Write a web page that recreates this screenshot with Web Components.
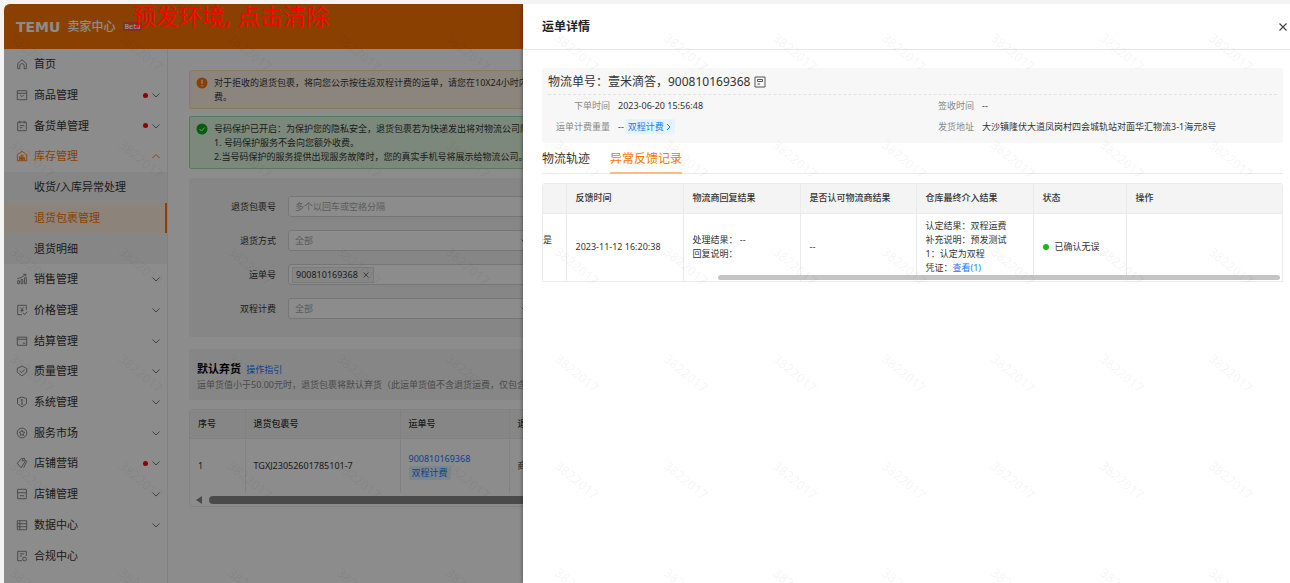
<!DOCTYPE html>
<html lang="zh-CN">
<head>
<meta charset="utf-8">
<meta name="viewport" content="width=device-width, initial-scale=1">
<title>运单详情</title>
<style>
  html, body {
    height: 100%;
    margin: 0;
  }
  body {
    --orange: #fb7701;
    --link: #1677ff;
    --line: #ebebeb;
    --panel: #f5f5f5;
    box-sizing: border-box;
    padding: 4px 0 0 4px;
    background: #f4f4f4;
    color: #333;
    font: 9px/14px "Noto Sans", "Noto Sans CJK SC", sans-serif;
    overflow: hidden;
  }
</style>
</head>
<body>
<seller-app></seller-app>

<script>
const ICONS = {
  home: '<path d="M2 6.5 7 2l5 4.5V12.5H9.5V9a2.5 2.5 0 0 0-5 0v3.5H2z"/>',
  goods: '<path d="M1.5 2h11v10.5h-11zM1.5 5h11M5 7l2 2 2-2"/>',
  order: '<path d="M2 2.5h10v10H2zM4.5 1v3M9.5 1v3M4.5 6.5h5M4.5 9h3"/>',
  stock: '<path d="M1.5 5.5 7 1.5l5.500 4v7h-11zM4 12V8h2v4M6 12V6h2v6M8 12V9h2v3M4 10h6"/>',
  sales: '<path d="M2 9h2v3.500H2zM6 7.500h2v5H6zM10 5.500h2v7h-2zM1.500 6.500C5 6 8 4.500 11 1.500M8.500 1.500H11.500V4"/>',
  price: '<path d="M7 12.500H2v-11h10V7M5 4l2 2.500L9 4M7 6.500V10M5 7.500h4M8.500 10.500l1.500 2 3-3.500"/>',
  settle: '<path d="M1.500 2.500h11v9.500h-11zM1.500 5h11M8 9.500h3"/>',
  quality: '<path d="M7 1.200 12.500 4v4.500L7 12.800 1.500 8.500V4zM4.500 7 6.500 9l3.500-3.500"/>',
  system: '<path d="M7 1.200 12.200 3v6L7 12.800 1.800 9V3zM7 4v5.500M5.500 4.500h2M6 9.500h2"/>',
  service: '<circle cx="7" cy="7" r="5.700"/><path d="m7 3.800 1 2 2.200.3-1.600 1.600.4 2.200-2-1-2 1 .4-2.200L3.800 6.100 6 5.800z"/>',
  promo: '<path d="M1.500 7.500 6 2l4-.5.500 4L6 12.500zM11 3.500l1.500 1.500L9 12.500"/><circle cx="8" cy="4" r=".8"/>',
  store: '<path d="M2 1.500h10l.5 4H1.500zM2 5.500v7h10v-7M4.500 9h5"/>',
  data: '<path d="M1.500 2h11v10.500h-11zM1.500 5.500h11M1.500 9h11M4.500 2v10.500"/>',
  rule: '<path d="M7 12.500H2v-11h10V7M4.500 4.500h5M4.500 7H7"/><circle cx="10" cy="10.500" r="2.200"/>'
};

const icon = name => `<svg class="icon" viewBox="0 0 14 14" width="12" height="12" fill="none" stroke="currentColor">${ICONS[name]}</svg>`;

function define(name, render) {
  customElements.define(name, class extends HTMLElement {
    constructor() {
      super();
      this.attachShadow({ mode: "open" });
    }
    connectedCallback() {
      this.shadowRoot.innerHTML = render(this);
    }
  });
}

define("top-bar", () => `
  <style>
    :host {
      display: flex;
      align-items: center;
      box-sizing: border-box;
      height: 45px;
      padding: 0 12px;
      background: var(--orange);
      color: #fff;
    }
    b { font: bold 14px/20px "DejaVu Sans", sans-serif; }
    span { margin-left: 7px; font-size: 12px; font-weight: 500; }
    i {
      margin-left: 8px;
      padding: 0 1px;
      border-radius: 2px;
      background: #f5503c;
      font: bold 7px/9px "Noto Sans", sans-serif;
    }
  </style>
  <b>TEMU</b><span>卖家中心</span><i>Beta</i>
`);

define("nav-item", el => `
  <style>
    :host { display: flex; flex: 1; min-height: 20px; }
    a {
      display: flex;
      flex: 1;
      align-items: center;
      gap: 4px;
      padding: 0 7px 0 12px;
      color: #333;
      font-size: 11px;
      text-decoration: none;
    }
    .label { flex: 1; }
    svg { flex: none; color: #777; }
    .icon { margin-right: 2px; }
    .dot { width: 5px; height: 5px; border-radius: 50%; background: #f00; }
    :host([sub]) { background: #f5f5f5; }
    :host([sub]) a { padding-left: 30px; }
    :host([open]) a, :host([open]) svg, :host([current]) a { color: var(--orange); }
    :host([current]) { background: #fff1e0; border-right: 2px solid var(--orange); }
  </style>
  <a href="#">
    ${el.hasAttribute("icon") ? icon(el.getAttribute("icon")) : ""}
    <span class="label"><slot></slot></span>
    ${el.hasAttribute("dot") ? '<span class="dot"></span>' : ""}
    ${el.hasAttribute("arrow") ? `<svg viewBox="0 0 8 8" width="8" height="8" fill="none" stroke="currentColor">
      <path d="${el.hasAttribute("open") ? "M0.500 6 4 2.500 7.500 6" : "M0.500 2.500 4 6 7.500 2.500"}"/></svg>` : ""}
  </a>
`);

define("side-nav", () => `
  <style>
    :host { display: flex; width: 163px; flex: none; border-right: 1px solid var(--line); }
    nav { display: flex; flex: 1; flex-direction: column; padding-bottom: 12px; }
  </style>
  <nav>
    <nav-item icon="home">首页</nav-item>
    <nav-item icon="goods" dot arrow>商品管理</nav-item>
    <nav-item icon="order" dot arrow>备货单管理</nav-item>
    <nav-item icon="stock" arrow open>库存管理</nav-item>
    <nav-item sub>收货/入库异常处理</nav-item>
    <nav-item sub current>退货包裹管理</nav-item>
    <nav-item sub>退货明细</nav-item>
    <nav-item icon="sales" arrow>销售管理</nav-item>
    <nav-item icon="price" arrow>价格管理</nav-item>
    <nav-item icon="settle" arrow>结算管理</nav-item>
    <nav-item icon="quality" arrow>质量管理</nav-item>
    <nav-item icon="system" arrow>系统管理</nav-item>
    <nav-item icon="service" arrow>服务市场</nav-item>
    <nav-item icon="promo" dot arrow>店铺营销</nav-item>
    <nav-item icon="store" arrow>店铺管理</nav-item>
    <nav-item icon="data" arrow>数据中心</nav-item>
    <nav-item icon="rule">合规中心</nav-item>
  </nav>
`);

define("notice-bar", el => `
  <style>
    :host {
      display: flex;
      gap: 6px;
      padding: 5px 6px 4px;
      border: 1px solid #ffd9b0;
      border-radius: 2px;
      background: #fff3e3;
      white-space: nowrap;
    }
    :host([type=success]) { border-color: #a3dfa3; background: #e0f8e0; }
    svg { flex: none; margin-top: 1px; }
  </style>
  ${el.getAttribute("type") === "success"
    ? '<svg viewBox="0 0 12 12" width="12" height="12"><circle cx="6" cy="6" r="5.500" fill="#00b011"/><path d="m3.500 6 2 2 3.200-3.500" fill="none" stroke="#fff"/></svg>'
    : '<svg viewBox="0 0 12 12" width="12" height="12"><circle cx="6" cy="6" r="5.500" fill="#fb7701"/><path d="M6 2.800v4M6 8v1.300" stroke="#fff" stroke-width="1.300"/></svg>'}
  <div><slot></slot></div>
`);

define("form-row", el => {
  const type = el.getAttribute("type");
  let control = `<input id="c" placeholder="${el.getAttribute("hint") || ""}">`;
  if (type === "select") {
    control = `<select id="c"><option>全部</option></select>
      <svg viewBox="0 0 8 8" width="8" height="8" fill="none" stroke="#888"><path d="M0.500 2.500 4 6 7.500 2.500"/></svg>`;
  }
  if (type === "tags") {
    control = `<span class="tag">900810169368<button aria-label="移除">
      <svg viewBox="0 0 6 6" width="6" height="6" stroke="#777"><path d="M0.500 0.500l5 5M5.500 0.500l-5 5"/></svg></button></span>` + control;
  }
  return `
  <style>
    :host { display: flex; align-items: center; gap: 12px; }
    label { width: 80px; text-align: right; }
    .box {
      display: flex;
      align-items: center;
      box-sizing: border-box;
      width: 246px;
      height: 21px;
      padding: 0 4px 0 3px;
      border: 1px solid #d8d8d8;
      border-radius: 3px;
      background: #fff;
    }
    input, select {
      flex: 1;
      min-width: 0;
      padding: 0 3px;
      border: 0;
      outline: 0;
      appearance: none;
      background: none;
      color: #aaa;
      font: inherit;
    }
    input::placeholder { color: #aaa; }
    .tag {
      display: flex;
      align-items: center;
      gap: 5px;
      padding: 0 4px 0 3px;
      border: 1px solid #e0e0e0;
      background: #f5f5f5;
    }
    button { display: flex; padding: 0; border: 0; background: none; }
  </style>
  <label for="c">${el.getAttribute("label")}</label>
  <div class="box">${control}</div>`;
});

define("package-page", () => `
  <style>
    :host { display: block; flex: 1; min-width: 0; padding: 21px 12px 0 21px; }
    notice-bar + notice-bar { margin-top: 7px; }
    .filters {
      display: flex;
      flex-direction: column;
      gap: 13px;
      margin-top: 9px;
      padding: 18px 7px;
      border-radius: 3px;
      background: var(--panel);
    }
    .intro { margin-top: 12px; padding: 12px 8px 7px; background: var(--panel); color: #888; white-space: nowrap; }
    h2 { display: inline; margin: 0 3px 0 0; color: #000; font-size: 11px; line-height: 16px; }
    p { margin: 0; line-height: 16px; }
    a { color: var(--link); text-decoration: none; }
    .list { margin-top: 9px; border: 1px solid var(--line); border-radius: 3px; }
    table { width: 100%; border-collapse: collapse; table-layout: fixed; }
    th, td { box-sizing: border-box; padding: 0 8px; border-right: 1px solid var(--line); text-align: left; font-weight: normal; }
    th { height: 28px; border-bottom: 1px solid var(--line); background: var(--panel); font-weight: 500; }
    td { height: 55px; }
    .tag { display: inline-block; padding: 0 3px; border-radius: 2px; background: #e0f2ff; }
    .scroll { display: flex; align-items: center; gap: 7px; height: 13px; padding-left: 6px; }
    .scroll::before { content: ""; border: 4px solid transparent; border-right: 6px solid #888; border-left: 0; }
    .scroll span { flex: 1; height: 8px; border-radius: 4px; background: #888; }
  </style>
  <notice-bar>对于拒收的退货包裹，将向您公示按往返双程计费的运单，请您在10X24小时内确认<br>费。</notice-bar>
  <notice-bar type="success">号码保护已开启：为保护您的隐私安全，退货包裹若为快递发出将对物流公司隐藏<br>1. 号码保护服务不会向您额外收费。<br>2.当号码保护的服务提供出现服务故障时，您的真实手机号将展示给物流公司。</notice-bar>
  <div class="filters">
    <form-row label="退货包裹号" hint="多个以回车或空格分隔"></form-row>
    <form-row label="退货方式" type="select"></form-row>
    <form-row label="运单号" type="tags"></form-row>
    <form-row label="双程计费" type="select"></form-row>
  </div>
  <div class="intro">
    <h2>默认弃货</h2> <a href="#">操作指引</a>
    <p>运单货值小于50.00元时，退货包裹将默认弃货（此运单货值不含退货运费，仅包含</p>
  </div>
  <div class="list">
    <table>
      <colgroup><col style="width:55px"><col style="width:155px"><col style="width:109px"><col></colgroup>
      <thead><tr><th>序号</th><th>退货包裹号</th><th>运单号</th><th>退货方式</th></tr></thead>
      <tbody><tr>
        <td>1</td><td>TGXJ23052601785101-7</td>
        <td><a href="#">900810169368</a><br><a class="tag" href="#">双程计费</a></td>
        <td>商家自提</td>
      </tr></tbody>
    </table>
    <div class="scroll"><span></span></div>
  </div>
`);

define("waybill-card", () => `
  <style>
    :host { display: block; padding: 5px 6px 8px; border-radius: 3px; background: #f7f7f7; }
    h3 {
      display: flex;
      align-items: center;
      gap: 4px;
      margin: 0 0 2px;
      padding-bottom: 4px;
      border-bottom: 1px dashed #e2e2e2;
      font-size: 12px;
      font-weight: normal;
      line-height: 17px;
    }
    dl {
      display: grid;
      grid-template-columns: 62px 1fr 36px 295px;
      gap: 4px 8px;
      align-items: center;
      margin: 0;
      line-height: 17px;
    }
    dt { color: #888; text-align: right; white-space: nowrap; }
    dd { display: flex; gap: 1px; align-items: center; margin: 0; white-space: nowrap; }
    a {
      display: flex;
      align-items: center;
      gap: 2px;
      padding: 0 4px 0 3px;
      border-radius: 3px;
      background: #e3f3ff;
      color: var(--link);
      line-height: 15px;
      text-decoration: none;
    }
    h3 button { display: flex; padding: 0; border: 0; background: none; }
  </style>
  <h3>物流单号：壹米滴答，900810169368
    <button aria-label="复制"><svg viewBox="0 0 12 12" width="12" height="12" fill="none" stroke="#555"><path d="M1 1h10v10H1zM3.500 3.500h5v2h-5zM3.500 8h2.500"/></svg></button>
  </h3>
  <dl>
    <dt>下单时间</dt><dd>2023-06-20 15:56:48</dd>
    <dt>签收时间</dt><dd>--</dd>
    <dt>运单计费重量</dt><dd>-- <a href="#">双程计费<svg viewBox="0 0 5 8" width="5" height="8" fill="none" stroke="currentColor"><path d="M1 1l3 3-3 3"/></svg></a></dd>
    <dt>发货地址</dt><dd>大沙镇隆伏大道凤岗村四会城轨站对面华汇物流3-1海元8号</dd>
  </dl>
`);

define("feedback-table", () => `
  <style>
    :host { display: block; border: 1px solid var(--line); border-radius: 3px 3px 0 0; }
    table { width: 100%; border-collapse: collapse; table-layout: fixed; }
    th, td { box-sizing: border-box; padding: 0 9px; text-align: left; font-weight: normal; }
    th + th, td + td { border-left: 1px solid var(--line); }
    th { height: 29px; border-bottom: 1px solid var(--line); background: #f4f4f4; font-weight: 500; white-space: nowrap; }
    td { height: 68px; }
    td:first-child { padding: 0; }
    a { color: var(--link); text-decoration: none; }
    .state { display: flex; align-items: center; gap: 6px; }
    .state::before { content: ""; width: 6px; height: 6px; border-radius: 50%; background: #0abf15; }
    .wrap { position: relative; }
    .bar { position: absolute; right: 2px; bottom: 1px; width: 76%; height: 5px; border-radius: 3px; background: #c4c4c4; }
  </style>
  <div class="wrap">
    <table>
      <colgroup>
        <col style="width:23px"><col style="width:117px"><col style="width:117px"><col style="width:116px">
        <col style="width:117px"><col style="width:93px"><col>
      </colgroup>
      <thead><tr>
        <th></th><th>反馈时间</th><th>物流商回复结果</th><th>是否认可物流商结果</th>
        <th>仓库最终介入结果</th><th>状态</th><th>操作</th>
      </tr></thead>
      <tbody><tr>
        <td>是<br>&nbsp;</td>
        <td>2023-11-12 16:20:38</td>
        <td>处理结果： --<br>回复说明：</td>
        <td>--</td>
        <td>认定结果：双程运费<br>补充说明：预发测试<br>1：认定为双程<br>凭证：<a href="#">查看(1)</a></td>
        <td><span class="state">已确认无误</span></td>
        <td></td>
      </tr></tbody>
    </table>
    <div class="bar"></div>
  </div>
`);

define("waybill-drawer", () => `
  <style>
    :host { display: block; background: #fff; }
    header {
      display: flex;
      align-items: center;
      justify-content: space-between;
      box-sizing: border-box;
      height: 46px;
      padding: 0 3px 0 19px;
      border-bottom: 1px solid #e8e8e8;
    }
    h1 { margin: 0; color: #222; font-size: 12px; }
    button { padding: 0; border: 0; background: none; color: #333; font: inherit; }
    header button { display: flex; }
    main { padding: 18px 7px 0 19px; }
    .tabs { display: flex; gap: 20px; height: 30px; margin-bottom: 9px; border-bottom: 1px solid var(--line); }
    .tabs button { height: 31px; box-sizing: border-box; padding-top: 3px; border-bottom: 2px solid transparent; font-size: 12px; }
    .tabs .on { border-color: #fdbb80; color: var(--orange); }
  </style>
  <header>
    <h1>运单详情</h1>
    <button aria-label="关闭"><svg viewBox="0 0 8 8" width="8" height="8" stroke="#444" stroke-width="1.200"><path d="M0.500 0.500l7 7M7.500 0.500l-7 7"/></svg></button>
  </header>
  <main>
    <waybill-card></waybill-card>
    <div class="tabs"><button>物流轨迹</button><button class="on">异常反馈记录</button></div>
    <feedback-table></feedback-table>
  </main>
`);

define("water-mark", () => `
  <style>
    :host {
      display: grid;
      grid-template-columns: repeat(12, 109px);
      grid-auto-rows: 107px;
      place-items: center;
      overflow: hidden;
      pointer-events: none;
      color: rgba(0, 0, 0, .05);
      font-size: 13px;
      font-weight: 500;
    }
    span { transform: rotate(39deg); }
  </style>
  ${"<span>3822017</span>".repeat(72)}
`);

define("seller-app", () => `
  <style>
    :host {
      display: flex;
      flex-direction: column;
      position: relative;
      height: 100%;
      border-radius: 6px 0 0 0;
      background: #fff;
      overflow: hidden;
    }
    .body { display: flex; flex: 1; min-height: 0; }
    .mask { position: absolute; inset: 0; background: rgba(0, 0, 0, .45); }
    waybill-drawer { position: absolute; top: 0; right: 0; bottom: 0; left: 519px; box-shadow: -1px 0 3px rgba(0, 0, 0, .3); }
    .env {
      position: absolute;
      top: 0;
      left: 129px;
      padding: 0;
      border: 0;
      background: none;
      color: #f00;
      font: 23px/24px "Noto Sans", "Noto Sans CJK SC", sans-serif;
    }
    water-mark { position: absolute; inset: -6px 0 0 -26px; }
  </style>
  <top-bar></top-bar>
  <div class="body">
    <side-nav></side-nav>
    <package-page></package-page>
  </div>
  <div class="mask"></div>
  <waybill-drawer></waybill-drawer>
  <button class="env">预发环境, 点击清除</button>
  <water-mark></water-mark>
`);
</script>
</body>
</html>
